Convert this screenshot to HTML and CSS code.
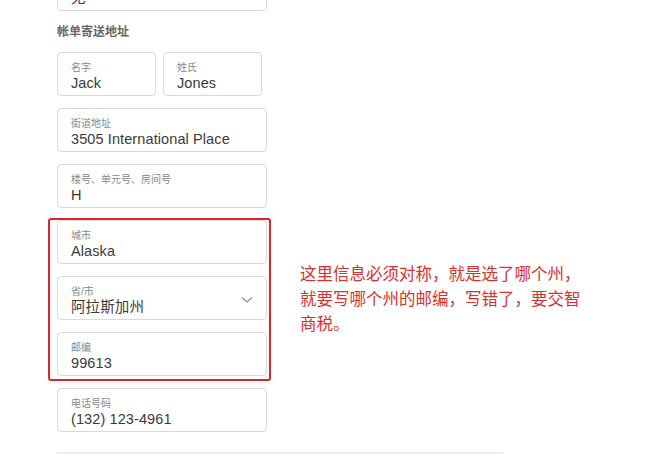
FILE: index.html
```html
<!DOCTYPE html>
<html lang="zh-CN">
<head>
    <meta charset="UTF-8">
    <title>帐单寄送地址</title>
    <link rel="stylesheet" href="styles.css">
</head>
<body>

    <div class="page">
        <div class="form">
            <!-- vorheriges Feld, oben abgeschnitten -->
            <div class="field">
                <span class="label">&nbsp;</span>
                <span class="value">无</span>
            </div>

            <h3 class="section-title">帐单寄送地址</h3>

            <div class="row">
                <div class="field half">
                    <span class="label">名字</span>
                    <span class="value">Jack</span>
                </div>
                <div class="field half">
                    <span class="label">姓氏</span>
                    <span class="value">Jones</span>
                </div>
            </div>

            <div class="field">
                <span class="label">街道地址</span>
                <span class="value">3505 International Place</span>
            </div>
            <div class="field">
                <span class="label">楼号、单元号、房间号</span>
                <span class="value">H</span>
            </div>

            <div class="marked">
                <div class="field">
                    <span class="label">城市</span>
                    <span class="value">Alaska</span>
                </div>
                <div class="field select">
                    <span class="label">省/市</span>
                    <span class="value">阿拉斯加州</span>
                    <svg class="chevron" width="12" height="8" viewBox="0 0 12 8">
                        <path d="M1 1.5 L6 6 L11 1.5" fill="none" stroke="#888" stroke-width="1.2"/>
                    </svg>
                </div>
                <div class="field">
                    <span class="label">邮编</span>
                    <span class="value">99613</span>
                </div>
                <div class="red-frame"></div>
            </div>

            <div class="field">
                <span class="label">电话号码</span>
                <span class="value">(132) 123-4961</span>
            </div>

            <hr class="divider">

            <div class="bottom">
                <span>账单地址</span>
                <span class="bottom-right">此地址必须与您付款方式的账单地址一致</span>
            </div>
        </div>

        <!-- Anmerkung -->
        <p class="note">这里信息必须对称，就是选了哪个州，就要写哪个州的邮编，写错了，要交智商税。</p>
    </div>

</body>
</html>
```

FILE: styles.css
```css
body {
    margin: 0;
    padding: 0;
    background-color: #fff;
    font-family: 'Liberation Sans', 'Noto Sans CJK SC', sans-serif;
    color: #333;
    overflow: hidden;
}
.page {
    position: relative;
    padding-left: 57px;
    margin-top: -33px;
}
.form {
    width: 210px;
    display: flex;
    flex-direction: column;
    gap: 12px;
}
.section-title {
    margin: 1px 0 0 0;
    font-size: 12px;
    font-weight: bold;
    color: #666;
    line-height: 16px;
}
.row {
    display: flex;
    gap: 7px;
}
.field {
    position: relative;
    box-sizing: border-box;
    height: 44px;
    border: 1px solid #d9d9d9;
    border-radius: 4px;
    padding: 8px 13px 0 13px;
    display: flex;
    flex-direction: column;
}
.field.half {
    width: 99px;
}
.label {
    font-size: 10px;
    line-height: 13px;
    color: #888;
}
.value {
    font-size: 14.5px;
    line-height: 18px;
    letter-spacing: 0.1px;
    color: #3a3a3a;
}
.select .chevron {
    position: absolute;
    right: 13px;
    top: 19px;
}
.marked {
    position: relative;
    display: flex;
    flex-direction: column;
    gap: 12px;
}
.red-frame {
    position: absolute;
    left: -9px;
    top: -2px;
    right: -4px;
    bottom: -5px;
    border: 2px solid #d9262b;
    border-radius: 3px;
}
.divider {
    width: 446px;
    margin: 8px 0 0 0;
    border: none;
    border-top: 2px solid #ececec;
}
.bottom {
    width: 446px;
    display: flex;
    font-size: 12px;
    color: #aaa;
    margin-top: 4px;
    white-space: nowrap;
}
.bottom-right {
    margin-left: 180px;
}
.note {
    position: absolute;
    left: 300px;
    top: 294px;
    width: 284px;
    margin: 0;
    font-family: 'Noto Sans CJK SC', sans-serif;
    font-size: 16.5px;
    line-height: 25px;
    color: #d9302f;
}
```
